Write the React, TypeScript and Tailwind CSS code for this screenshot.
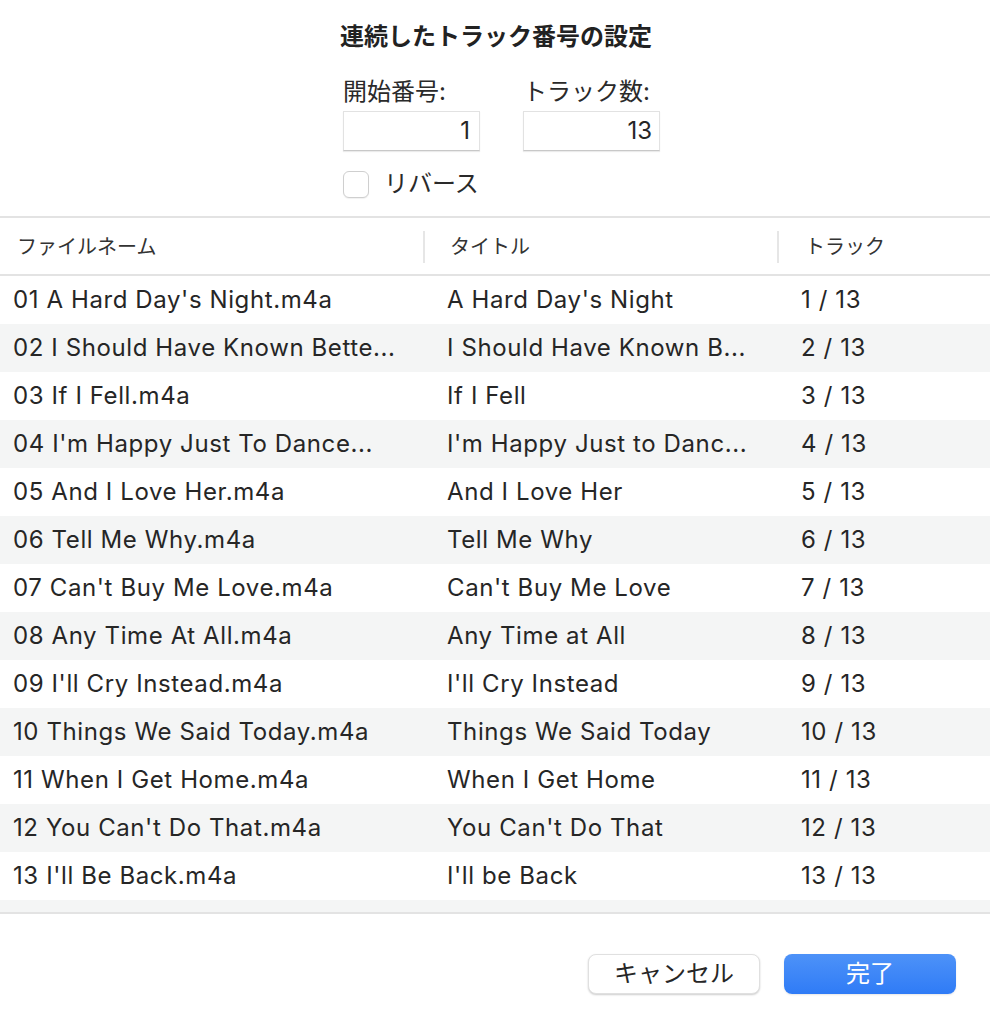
const rows = [
  ["01 A Hard Day's Night.m4a", "A Hard Day's Night"],
  ["02 I Should Have Known Bette...", "I Should Have Known B..."],
  ["03 If I Fell.m4a", "If I Fell"],
  ["04 I'm Happy Just To Dance...", "I'm Happy Just to Danc..."],
  ["05 And I Love Her.m4a", "And I Love Her"],
  ["06 Tell Me Why.m4a", "Tell Me Why"],
  ["07 Can't Buy Me Love.m4a", "Can't Buy Me Love"],
  ["08 Any Time At All.m4a", "Any Time at All"],
  ["09 I'll Cry Instead.m4a", "I'll Cry Instead"],
  ["10 Things We Said Today.m4a", "Things We Said Today"],
  ["11 When I Get Home.m4a", "When I Get Home"],
  ["12 You Can't Do That.m4a", "You Can't Do That"],
  ["13 I'll Be Back.m4a", "I'll be Back"],
]

const font = { fontFamily: 'Inter, "Noto Sans CJK JP", sans-serif' }

export default function App() {
  return (
    <div className="w-[990px] h-[1020px] bg-white text-[#262626] flex flex-col" style={font}>
      <div className="flex flex-col items-center pt-[22px]">
        <h1 className="text-[24px] font-bold leading-[30px] text-[#222] pl-[2px]">連続したトラック番号の設定</h1>
      </div>
      <div className="flex flex-col pl-[343px] pt-[25px]">
        <div className="flex gap-[43px]">
          <div className="flex flex-col">
            <span className="text-[24px] leading-[30px] text-[#2a2a2a]">開始番号:</span>
            <div className="mt-[4px] w-[137px] h-[40px] border border-[#e2e2e2] border-b-[#c8c8c8] shadow-[0_1px_1px_rgba(0,0,0,0.08)] flex items-center justify-end pr-[9px] text-[24px]">1</div>
          </div>
          <div className="flex flex-col">
            <span className="text-[24px] leading-[30px] text-[#2a2a2a]">トラック数:</span>
            <div className="mt-[4px] w-[137px] h-[40px] border border-[#e2e2e2] border-b-[#c8c8c8] shadow-[0_1px_1px_rgba(0,0,0,0.08)] flex items-center justify-end pr-[7px] text-[24px]">13</div>
          </div>
        </div>
        <div className="flex items-center gap-[15px] mt-[19px]">
          <div className="w-[26px] h-[27px] rounded-[6px] border border-[#cfcfcf] shadow-[0_1px_1px_rgba(0,0,0,0.06)] bg-white" />
          <span className="text-[24px] leading-[28px] text-[#2a2a2a]">リバース</span>
        </div>
      </div>

      <div className="mt-[18px] border-t-2 border-[#e3e3e3]">
        <div className="flex h-[58px] items-center pt-[2px] border-b-2 border-[#e3e3e3] text-[20px] text-[#333]">
          <div className="w-[425px] pl-[17px] border-r-2 border-[#e6e6e6] h-[32px] flex items-center">ファイルネーム</div>
          <div className="w-[354px] pl-[25px] border-r-2 border-[#e6e6e6] h-[32px] flex items-center">タイトル</div>
          <div className="pl-[26px] flex items-center">トラック</div>
        </div>
        {rows.map(([file, title], i) => (
          <div key={i} className={`flex h-[48px] items-center text-[24px] tracking-[0.6px] text-[#262626] ${i % 2 === 1 ? 'bg-[#f4f5f5]' : 'bg-white'}`}>
            <div className="w-[434px] pl-[13px] whitespace-nowrap">{file}</div>
            <div className="w-[354px] pl-[13px] whitespace-nowrap">{title}</div>
            <div className="pl-[13px] whitespace-nowrap">{i + 1} / 13</div>
          </div>
        ))}
        <div className="h-[14px] bg-[#f4f5f5] border-b-2 border-[#e3e3e3]" />
      </div>

      <div className="flex justify-end gap-[24px] pr-[34px] mt-[40px]">
        <button className="w-[172px] h-[40px] rounded-[8px] bg-white border border-[#e0e0e0] shadow-[0_1px_2px_rgba(0,0,0,0.2)] text-[24px] text-[#262626]">キャンセル</button>
        <button className="w-[172px] h-[40px] rounded-[8px] bg-gradient-to-b from-[#4d92f8] to-[#2f7bf6] shadow-[0_1px_2px_rgba(0,0,0,0.1)] text-[24px] text-white">完了</button>
      </div>
    </div>
  )
}
